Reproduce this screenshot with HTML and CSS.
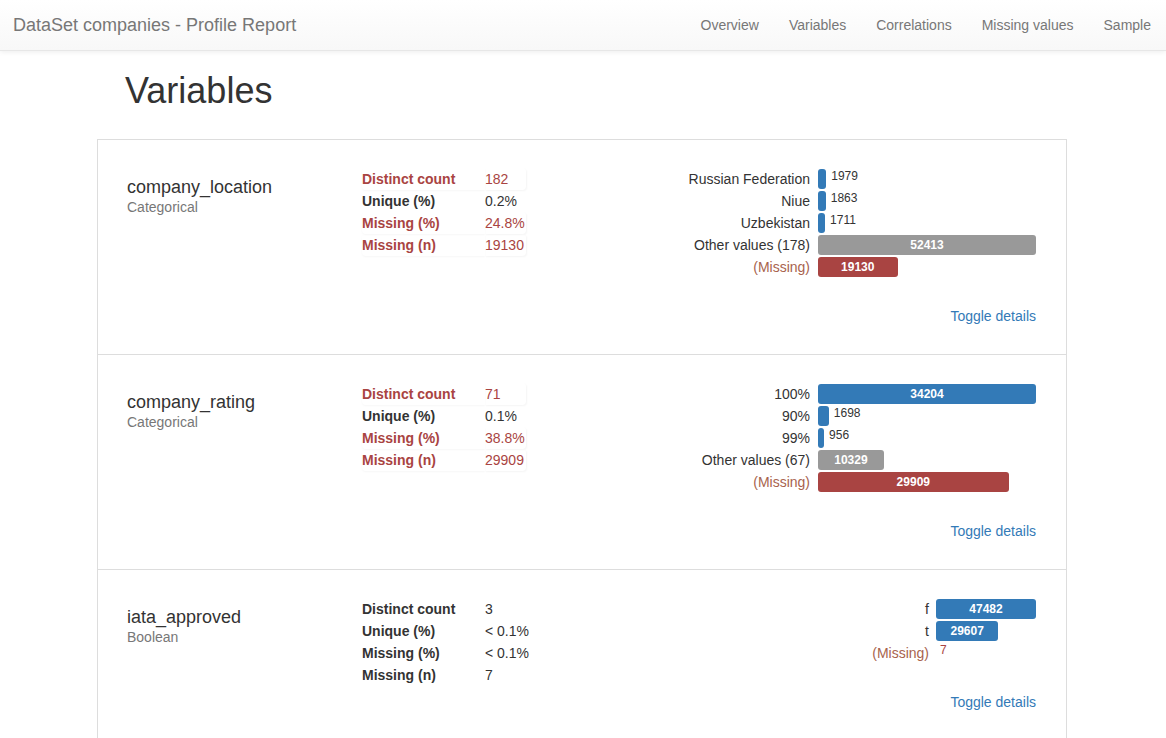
FILE: index.html
```html
<!DOCTYPE html>
<html lang="en">
<head>
<meta charset="utf-8">
<title>DataSet companies - Profile Report</title>
<link rel="stylesheet" href="styles.css">
</head>
<body>
<nav class="navbar">
  <a class="brand" href="#">DataSet companies - Profile Report</a>
  <ul class="nav">
    <li><a href="#overview">Overview</a></li>
    <li><a href="#variables">Variables</a></li>
    <li><a href="#correlations">Correlations</a></li>
    <li><a href="#missing">Missing values</a></li>
    <li><a href="#sample">Sample</a></li>
  </ul>
</nav>

<main class="container">
  <h1 class="page-header">Variables</h1>
  <div class="variables">

    <section class="var-row">
      <div class="var-grid">
        <div class="var-name">
          <div class="name">company_location</div>
          <div class="vtype">Categorical</div>
        </div>
        <table class="stats">
          <tr class="alert"><th>Distinct count</th><td>182</td></tr>
          <tr><th>Unique (%)</th><td>0.2%</td></tr>
          <tr class="alert"><th>Missing (%)</th><td>24.8%</td></tr>
          <tr class="alert"><th>Missing (n)</th><td>19130</td></tr>
        </table>
        <div class="freq wide">
          <div class="frow"><span class="flabel">Russian Federation</span><span class="fcell"><span class="bar blue" style="width:3.78%"></span><span class="out">1979</span></span></div>
          <div class="frow"><span class="flabel">Niue</span><span class="fcell"><span class="bar blue" style="width:3.55%"></span><span class="out">1863</span></span></div>
          <div class="frow"><span class="flabel">Uzbekistan</span><span class="fcell"><span class="bar blue" style="width:3.26%"></span><span class="out">1711</span></span></div>
          <div class="frow"><span class="flabel">Other values (178)</span><span class="fcell"><span class="bar grey" style="width:100%">52413</span></span></div>
          <div class="frow"><span class="flabel missing">(Missing)</span><span class="fcell"><span class="bar red" style="width:36.5%">19130</span></span></div>
        </div>
      </div>
      <div class="toggle"><a href="#">Toggle details</a></div>
    </section>

    <section class="var-row">
      <div class="var-grid">
        <div class="var-name">
          <div class="name">company_rating</div>
          <div class="vtype">Categorical</div>
        </div>
        <table class="stats">
          <tr class="alert"><th>Distinct count</th><td>71</td></tr>
          <tr><th>Unique (%)</th><td>0.1%</td></tr>
          <tr class="alert"><th>Missing (%)</th><td>38.8%</td></tr>
          <tr class="alert"><th>Missing (n)</th><td>29909</td></tr>
        </table>
        <div class="freq wide">
          <div class="frow"><span class="flabel">100%</span><span class="fcell"><span class="bar blue" style="width:100%">34204</span></span></div>
          <div class="frow"><span class="flabel">90%</span><span class="fcell"><span class="bar blue" style="width:4.96%"></span><span class="out">1698</span></span></div>
          <div class="frow"><span class="flabel">99%</span><span class="fcell"><span class="bar blue" style="width:2.8%"></span><span class="out">956</span></span></div>
          <div class="frow"><span class="flabel">Other values (67)</span><span class="fcell"><span class="bar grey" style="width:30.2%">10329</span></span></div>
          <div class="frow"><span class="flabel missing">(Missing)</span><span class="fcell"><span class="bar red" style="width:87.44%">29909</span></span></div>
        </div>
      </div>
      <div class="toggle"><a href="#">Toggle details</a></div>
    </section>

    <section class="var-row">
      <div class="var-grid">
        <div class="var-name">
          <div class="name">iata_approved</div>
          <div class="vtype">Boolean</div>
        </div>
        <table class="stats">
          <tr><th>Distinct count</th><td>3</td></tr>
          <tr><th>Unique (%)</th><td>&lt; 0.1%</td></tr>
          <tr><th>Missing (%)</th><td>&lt; 0.1%</td></tr>
          <tr><th>Missing (n)</th><td>7</td></tr>
        </table>
        <div class="freq narrow">
          <div class="frow"><span class="flabel">f</span><span class="fcell"><span class="bar blue" style="width:100%">47482</span></span></div>
          <div class="frow"><span class="flabel">t</span><span class="fcell"><span class="bar blue" style="width:62.35%">29607</span></span></div>
          <div class="frow"><span class="flabel missing">(Missing)</span><span class="fcell"><span class="out red-text">7</span></span></div>
        </div>
      </div>
      <div class="toggle"><a href="#">Toggle details</a></div>
    </section>

  </div>
</main>
</body>
</html>
```

FILE: styles.css
```css
html, body {
  margin: 0;
  padding: 0;
}
body {
  font-family: "Liberation Sans", Arial, Helvetica, sans-serif;
  font-size: 14px;
  line-height: 1.42857;
  color: #333;
  background: #fff;
}
a {
  text-decoration: none;
}

.navbar {
  height: 50px;
  display: flex;
  align-items: center;
  justify-content: space-between;
  background: linear-gradient(to bottom, #ffffff 0%, #f8f8f8 100%);
  border-bottom: 1px solid #e7e7e7;
  box-shadow: 0 1px 5px rgba(0, 0, 0, 0.075);
}
.brand {
  padding: 0 15px 0 13px;
  font-size: 18px;
  line-height: 50px;
  color: #777;
}
.nav {
  display: flex;
  list-style: none;
  margin: 0;
  padding: 0;
}
.nav a {
  display: block;
  padding: 0 15px;
  line-height: 50px;
  color: #777;
}

.container {
  width: 970px;
  margin: 0 auto;
}
.page-header {
  font-size: 36px;
  font-weight: normal;
  line-height: 1.1;
  margin: 20px 0 28px;
  padding-left: 27px;
  color: #333;
}

.variables {
  box-sizing: border-box;
  width: 970px;
  border: 1px solid #ddd;
  border-bottom: 0;
  margin-left: -1px;
}
.var-row {
  border-bottom: 1px solid #ddd;
  padding: 28px 30px 28px 29px;
}
.var-grid {
  display: grid;
  grid-template-columns: 235px 234px 1fr;
  align-items: start;
}
.var-name {
  padding-top: 9px;
}
.name {
  font-size: 18px;
  line-height: 20px;
  color: #333;
}
.vtype {
  font-size: 14px;
  line-height: 20px;
  color: #777;
}

.stats {
  justify-self: start;
  border-collapse: separate;
  border-spacing: 0;
  margin-bottom: 6px;
}
.stats th,
.stats td {
  padding: 0;
  height: 22px;
  line-height: 22px;
  text-align: left;
  vertical-align: middle;
}
.stats th {
  width: 123px;
  font-weight: bold;
}
.stats td {
  padding-right: 1px;
}
.stats tr.alert th,
.stats tr.alert td {
  color: #a94442;
  box-shadow: 0 1px 2px rgba(0, 0, 0, 0.035);
}
.stats tr.alert th {
  border-radius: 4px 0 0 4px;
}
.stats tr.alert td {
  border-radius: 0 4px 4px 0;
  box-shadow: 1px 1px 2px rgba(0, 0, 0, 0.045);
}

.freq {
  margin-bottom: 28px;
  display: grid;
}
.frow {
  display: grid;
  height: 22px;
  align-items: center;
}
.freq.wide .frow {
  grid-template-columns: 1fr 218px;
}
.freq.narrow .frow {
  grid-template-columns: 1fr 100px;
}
.flabel {
  text-align: right;
  padding-right: 8px;
  line-height: 22px;
  white-space: nowrap;
}
.freq.narrow .flabel {
  padding-right: 7px;
}
.flabel.missing {
  color: #a8634d;
}
.fcell {
  display: flex;
  align-items: center;
  height: 22px;
}
.bar {
  display: block;
  height: 20px;
  line-height: 20px;
  border-radius: 3px;
  color: #fff;
  font-size: 12px;
  font-weight: bold;
  text-align: center;
  overflow: hidden;
  white-space: nowrap;
  flex: none;
}
.bar.blue {
  background: #337ab7;
}
.bar.grey {
  background: #999;
}
.bar.red {
  background: #a94442;
}
.out {
  margin-left: 5px;
  font-size: 12px;
  line-height: 14px;
  color: #333;
  position: relative;
  top: -3px;
}
.out.red-text {
  color: #a94442;
  margin-left: 4px;
}

.toggle {
  text-align: right;
  line-height: 20px;
}
.toggle a {
  color: #337ab7;
}
```
